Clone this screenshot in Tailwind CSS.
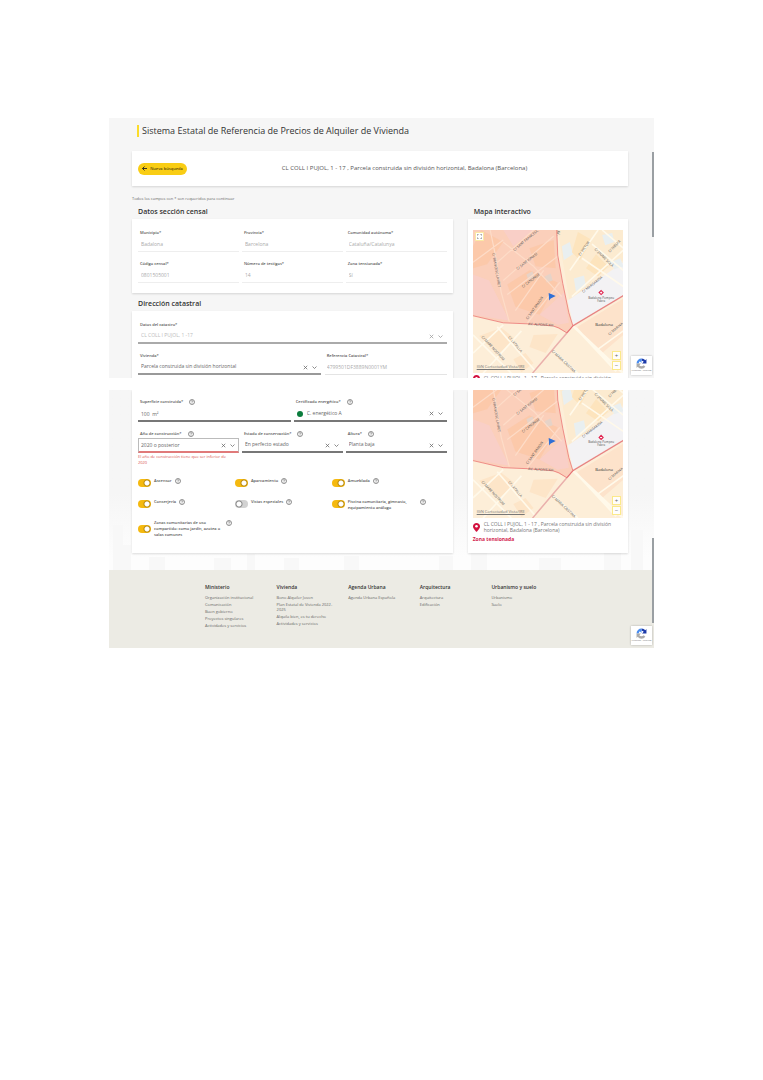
<!DOCTYPE html>
<html lang="es">
<head>
<meta charset="utf-8">
<title>Sistema Estatal de Referencia de Precios de Alquiler de Vivienda</title>
<script src="https://cdn.jsdelivr.net/npm/@tailwindcss/browser@4"></script>
</head>
<body class="min-h-screen bg-white px-[109px] pt-[118px] font-['Open_Sans','Noto_Sans',sans-serif] text-[#555]">

<!-- Shared drawings -->
<svg class="hidden" aria-hidden="true">
  <symbol id="x" viewBox="0 0 10 10"><path d="M1.500 1.500L8.500 8.500M8.500 1.500L1.500 8.500" fill="none" stroke="currentColor" stroke-width="1.5"/></symbol>
  <symbol id="down" viewBox="0 0 10 10"><path d="M1 3L5 7L9 3" fill="none" stroke="currentColor" stroke-width="1.5"/></symbol>
  <symbol id="help" viewBox="0 0 12 12"><circle cx="6" cy="6" r="5" fill="none" stroke="currentColor" stroke-width="1.3"/><path d="M4.400 4.800C4.400 2.600 7.700 2.700 7.600 4.800C7.500 6 6 6 6 7.300M6 8.200V9.300" fill="none" stroke="currentColor" stroke-width="1.2"/></symbol>
  <symbol id="pin" viewBox="0 0 14 18"><path d="M7 0C3 0 0 3 0 7C0 11.500 7 18 7 18S14 11.500 14 7C14 3 11 0 7 0Z" fill="#d3123f"/><circle cx="7" cy="6.500" r="2.600" fill="#fff"/></symbol>
  <symbol id="captcha" viewBox="0 0 20 20">
    <path d="M10 1A9 9 0 0 1 17 4L19 2V10H11L14 7A5 5 0 0 0 10 5Z" fill="#1c3aa9"/>
    <path d="M1 10A9 9 0 0 1 10 1V9L7 6A5 5 0 0 0 5 10Z" fill="#4a8df0"/>
    <path d="M1 10H9L6 13A5 5 0 0 0 14 13L17 16A9 9 0 0 1 3 16L1 18Z" fill="#ababab"/>
  </symbol>
  <symbol id="map" viewBox="0 0 149 142">
    <rect width="149" height="142" fill="#fdeed8"/>
    <path d="M84 0H149V30L120 45L99 92Z" fill="#fcebd0"/>
    <path d="M99 94L94 70L149 32V65Z" fill="#f3f2f4"/>
    <path d="M88 16L96 12L99 24L90 30ZM100 48L110 45L112 56L102 61ZM128 5L138 3L140 12L131 15ZM136 32L146 28L149 36L140 39Z" fill="#e9eff0"/>
    <path d="M149 68L102 97L128 122L149 104Z" fill="#fde3cb"/>
    <path d="M104 2L118 10L106 30L98 22ZM122 24L134 36L124 46L112 38Z" fill="#fde4bd"/>
    <path d="M6 105L28 97L42 108L26 122ZM60 104L84 103L72 122L56 116ZM40 128L52 122L60 132L48 141Z" fill="#fde5c8"/>
    <g fill="none" stroke="#fff9ea" stroke-width="1.600">
      <path d="M0 122L30 94M10 142L48 100M24 96L62 140M0 104L38 142M80 120L104 142M124 118L149 100"/>
      <path d="M99 95L149 142M102 97L142 140" stroke-width="2.400"/>
      <path d="M98 66L149 20M96 40L124 0M108 28L149 56M118 14L149 40M128 0L149 18"/>
    </g>
    <path d="M0 0H83L84 25L89 53L95 82L99 95L93 102L79 95L54 93L30 92L0 85Z" fill="#fbcfba"/>
    <path d="M8 0L30 12L14 34L0 38V16ZM34 54L56 40L84 52L66 84L42 76ZM56 18L80 10L82 38L62 36Z" fill="#fcc6a4" opacity=".7"/>
    <path d="M0 44L16 50L36 90L0 84ZM30 0H60L40 16ZM66 84L90 62L95 92L84 94Z" fill="#f8cfcd" opacity=".7"/>
    <path d="M71 46L77 43L79 50L73 52ZM53 44L59 41L61 47L55 50Z" fill="#e6d3c8"/>
    <g fill="none" stroke="#fddcc8" stroke-width="1.200">
      <path d="M17 0L22 24L28 62L36 91M0 32L30 10M22 34L60 0M30 50L80 6M34 64L84 26M42 80L70 40M54 92L86 52M60 36L88 66M30 12L60 36"/>
    </g>
    <path d="M149 65L99 95L93 102L59 142" fill="none" stroke="#eab0ac" stroke-width="1.500"/>
    <path d="M83 0L84 25L89 53L95 82L99 95L93 102L85 97L79 95L54 93L30 92L0 85M149 65L99 95L93 102" fill="none" stroke="#e8696b" stroke-width=".7"/>
    <path d="M75 62.500L82 65.500L77 68L75.500 70Z" fill="#2f6fd6"/>
    <path d="M127 60L129 62L127 64L125 62Z" fill="#fff" stroke="#e0244f" stroke-width="1.100"/>
    <g fill="#555" font-size="3.500" text-anchor="middle" font-family="Open Sans, sans-serif">
      <text transform="translate(53 11) rotate(-40)">C/ SANT FRANCESC</text>
      <text transform="translate(54 32) rotate(-38)">C/ SANT IGNASI</text>
      <text transform="translate(58 51) rotate(-38)">C/ CANONGE</text>
      <text transform="translate(62 78) rotate(-55)">C/ SANT RAMON</text>
      <text transform="translate(22 40) rotate(80)">C/ FRANCESC LAYRET</text>
      <text transform="translate(111 19) rotate(-55)">C/ VICTOR</text>
      <text transform="translate(129 28) rotate(45)">C/ JAUME SOLÀ</text>
      <text transform="translate(141 17) rotate(-45)">C/ NIELFA</text>
      <text transform="translate(119 55) rotate(-38)">C/ MARGARIDA</text>
      <text transform="translate(19 118) rotate(47)">C/ MARE NOSTRUM</text>
      <text transform="translate(41 114) rotate(50)">C/ LATRILLA</text>
      <text transform="translate(89 131) rotate(43)">C/ MARIA CRISTINA</text>
      <text transform="translate(142 99) rotate(-40)">C/ MARINA</text>
      <text transform="translate(83 3) rotate(90)">AV.</text>
      <text transform="translate(67 95) rotate(3)">AV. ALFONS XIII</text>
      <text x="127" y="68" font-size="3">Badalona Pompeu</text>
      <text x="127" y="71" font-size="3">Fabra</text>
      <text x="130" y="95" font-size="4" fill="#333">Badalona</text>
    </g>
  </symbol>
</svg>

<main>
<!-- Upper part of the form -->
<section class="relative h-[260px] overflow-hidden bg-[#f6f6f6] pr-[26px] pl-[23px] pt-[7px]">
  <div class="absolute top-[34px] right-0 h-[85px] w-[2px] bg-[#9a9fa3]"></div>
  <h1 class="ml-[5px] border-l-2 border-[#fbdc2a] pl-[3px] text-[9px] leading-[12px] text-[#333]">Sistema Estatal de Referencia de Precios de Alquiler de Vivienda</h1>

  <div class="mt-[14px] flex h-[35px] items-center bg-white px-[6px] shadow-[0_1px_2px_#0002]">
    <button class="flex h-[12px] w-[49px] items-center justify-center gap-[3px] rounded-full bg-[#f9cd14] text-[4px] font-semibold text-[#57470a]">
      <svg class="size-[5px]" viewBox="0 0 10 10"><path d="M10 5H1M5 1L1 5L5 9" fill="none" stroke="#222" stroke-width="1.800"/></svg>Nueva búsqueda</button>
    <p class="flex-1 text-center text-[6px]">CL COLL I PUJOL, 1 - 17 , Parcela construida sin división horizontal, Badalona (Barcelona)</p>
  </div>

  <p class="mt-[10px] text-[4px] leading-[6px] text-[#666]">Todos los campos con * son requeridos para continuar</p>

  <div class="mt-[4px] grid grid-cols-[2fr_1fr] gap-[15px]">
    <div>
      <h2 class="mb-[1px] pl-[6px] text-[7px] leading-[12px] font-semibold text-[#333]">Datos sección censal</h2>
      <div class="grid h-[74px] grid-cols-3 content-start gap-x-[3px] gap-y-[9px] bg-white px-[6px] pt-[11px] shadow-[0_1px_2px_#0002]">
        <div class="border-b border-[#eee]"><label for="mun" class="block pl-[2px] text-[4px] leading-[6px] font-semibold">Municipio*</label><input id="mun" disabled value="Badalona" class="block h-[15px] w-full px-[3px] text-[5px] text-[#aaa]"></div>
        <div class="border-b border-[#eee]"><label for="prov" class="block pl-[2px] text-[4px] leading-[6px] font-semibold">Provincia*</label><input id="prov" disabled value="Barcelona" class="block h-[15px] w-full px-[3px] text-[5px] text-[#aaa]"></div>
        <div class="border-b border-[#eee]"><label for="com" class="block pl-[2px] text-[4px] leading-[6px] font-semibold">Comunidad autónoma*</label><input id="com" disabled value="Cataluña/Catalunya" class="block h-[15px] w-full px-[3px] text-[5px] text-[#aaa]"></div>
        <div class="border-b border-[#eee]"><label for="cod" class="block pl-[2px] text-[4px] leading-[6px] font-semibold">Código censal*</label><input id="cod" disabled value="0801505001" class="block h-[15px] w-full px-[3px] text-[5px] text-[#aaa]"></div>
        <div class="border-b border-[#eee]"><label for="tes" class="block pl-[2px] text-[4px] leading-[6px] font-semibold">Número de testigos*</label><input id="tes" disabled value="14" class="block h-[15px] w-full px-[3px] text-[5px] text-[#aaa]"></div>
        <div class="border-b border-[#eee]"><label for="zon" class="block pl-[2px] text-[4px] leading-[6px] font-semibold">Zona tensionada*</label><input id="zon" disabled value="Sí" class="block h-[15px] w-full px-[3px] text-[5px] text-[#aaa]"></div>
      </div>

      <h2 class="mt-[5px] mb-[1px] pl-[6px] text-[7px] leading-[12px] font-semibold text-[#333]">Dirección catastral</h2>
      <div class="h-[80px] bg-white px-[6px] pt-[11px] shadow-[0_1px_2px_#0002]">
        <label for="cat" class="block pl-[2px] text-[4px] leading-[6px] font-semibold">Datos del catastro*</label>
        <div class="flex h-[16px] items-center gap-[4px] border-b-2 border-[#aaa] pt-[2px] pr-[4px] text-[#999]">
          <select id="cat" disabled class="min-w-0 flex-1 appearance-none pl-[3px] text-[5px] text-[#bbb] opacity-100"><option>CL COLL I PUJOL, 1 -17</option></select>
          <button aria-label="Borrar catastro"><svg class="size-[5px]"><use href="#x"/></svg></button><svg class="size-[5px]"><use href="#down"/></svg>
        </div>
        <div class="mt-[9px] grid grid-cols-[3fr_2fr] gap-[4px]">
          <div>
            <label for="viv" class="block pl-[2px] text-[4px] leading-[6px] font-semibold">Vivienda*</label>
            <div class="flex h-[16px] items-center gap-[4px] border-b-2 border-[#999] pt-[2px] pr-[4px] text-[#666]">
              <select id="viv" class="min-w-0 flex-1 appearance-none pl-[3px] text-[5px] text-[#666]"><option>Parcela construida sin división horizontal</option></select>
              <button aria-label="Borrar vivienda"><svg class="size-[5px]"><use href="#x"/></svg></button><svg class="size-[5px]"><use href="#down"/></svg>
            </div>
          </div>
          <div>
            <label for="ref" class="block pl-[2px] text-[4px] leading-[6px] font-semibold">Referencia Catastral*</label>
            <input id="ref" disabled value="4799501DF3889N0001YM" class="block h-[16px] w-full border-b border-[#e4e4e4] px-[2px] text-[5px] text-[#aaa]">
          </div>
        </div>
      </div>
    </div>

    <div>
      <h2 class="mb-[1px] pl-[6px] text-[7px] leading-[12px] font-semibold text-[#333]">Mapa interactivo</h2>
      <div class="bg-white px-[5px] pt-[11px] pb-[10px] shadow-[0_1px_2px_#0002]">
        <div class="relative">
          <svg class="block w-full" viewBox="0 0 149 142" role="img" aria-label="Mapa de Badalona"><use href="#map"/></svg>
          <button aria-label="Pantalla completa" class="absolute top-[2px] left-[2px] flex size-[9px] items-center justify-center border border-[#fbe9a5] bg-white text-[#777]"><svg class="size-[5px]" viewBox="0 0 10 10"><path d="M1 3V1H3M7 1H9V3M9 7V9H7M3 9H1V7" fill="none" stroke="currentColor" stroke-width="1.500"/></svg></button>
          <div class="absolute right-[2px] bottom-[3px] flex flex-col gap-[1px] text-[6px] leading-none text-[#666]">
            <button class="size-[9px] border border-[#fbe98a] bg-white/90">+</button>
            <button class="size-[9px] border border-[#fbe98a] bg-white/90">−</button>
          </div>
          <a href="#" class="absolute bottom-[3px] left-[4px] text-[4px] leading-[6px] text-[#777] underline">IGN Cartociudad Vista/IRE</a>
        </div>
        <p class="mt-[2px] flex gap-[4px] text-[5px] leading-[6px] text-[#777]"><svg class="h-[9px] w-[7px] shrink-0"><use href="#pin"/></svg><span>CL COLL I PUJOL, 1 - 17 , Parcela construida sin división horizontal, Badalona (Barcelona)</span></p>
      </div>
    </div>
  </div>
  <div class="absolute right-[2px] bottom-[3px] flex h-[19px] w-[21px] flex-col items-center justify-center bg-white shadow-[0_0_2px_#0004]">
    <svg class="size-[11px]"><use href="#captcha"/></svg><span class="text-[2px] leading-[4px] text-[#777]">Privacidad - Términos</span>
  </div>
</section>

<!-- Lower part of the form -->
<section class="relative mt-[12px] overflow-hidden bg-linear-to-b from-[#f6f6f6] from-40% to-[#fdfdfd] to-65%">
  <div class="absolute right-0 bottom-[25px] z-10 h-[85px] w-[2px] bg-[#9a9fa3]"></div>
  <svg class="absolute bottom-[78px] left-0 h-[70px] w-full" viewBox="0 0 545 70" preserveAspectRatio="none" aria-hidden="true"><path d="M4 70V25H14V45H22V70ZM40 70V57H56V70ZM105 70V58H122V70ZM138 70V54H146V70ZM175 70V58H190V70ZM235 70V56H250V70ZM330 70V56H344V70ZM362 70V48H378V70ZM430 70V58H452V70ZM495 70V40H512V70ZM522 70V30H534V70Z" fill="#f8f8f8"/></svg>
  <div class="relative grid grid-cols-[2fr_1fr] gap-[15px] pr-[26px] pb-[17px] pl-[23px]">
    <div class="bg-white px-[6px] pt-[9px] pb-[15px] shadow-[0_1px_2px_#0002]">
      <div class="grid grid-cols-2 gap-[3px]">
        <div>
          <div class="flex items-center gap-[6px] pl-[2px] text-[4px] leading-[6px] font-semibold"><label for="sup">Superficie construida*</label><svg class="size-[6px]"><use href="#help"/></svg></div>
          <input id="sup" value="100  m²" class="block h-[17px] w-full border-b-2 border-[#777] px-[3px] pt-[2px] text-[5px] text-[#666]">
        </div>
        <div>
          <div class="flex items-center gap-[6px] pl-[2px] text-[4px] leading-[6px] font-semibold"><label for="cer">Certificado energético*</label><svg class="size-[6px]"><use href="#help"/></svg></div>
          <div class="flex h-[17px] items-center gap-[4px] border-b-2 border-[#777] pt-[2px] pr-[4px] pl-[3px] text-[#666]">
            <i class="size-[6px] rounded-full bg-[#0b7d3e]"></i>
            <select id="cer" class="min-w-0 flex-1 appearance-none text-[5px]"><option>C. energético A</option></select>
            <button aria-label="Borrar certificado"><svg class="size-[5px]"><use href="#x"/></svg></button><svg class="size-[5px]"><use href="#down"/></svg>
          </div>
        </div>
      </div>
      <div class="mt-[9px] grid grid-cols-3 gap-[3px]">
        <div>
          <div class="flex items-center gap-[6px] pl-[2px] text-[4px] leading-[6px] font-semibold"><label for="ano">Año de construcción*</label><svg class="size-[6px]"><use href="#help"/></svg></div>
          <div class="mt-[1px] flex h-[15px] items-center gap-[4px] border border-b-2 border-[#bbb] border-b-[#e07a7a] pt-px pr-[3px] pl-[2px] text-[#666]">
            <select id="ano" class="min-w-0 flex-1 appearance-none text-[5px]"><option>2020 o posterior</option></select>
            <button aria-label="Borrar año"><svg class="size-[5px]"><use href="#x"/></svg></button><svg class="size-[5px]"><use href="#down"/></svg>
          </div>
          <p class="mt-[1px] text-[4px] leading-[6px] whitespace-nowrap text-[#d9534f]">El año de construcción tiene que ser inferior de<br>2020</p>
        </div>
        <div>
          <div class="flex items-center gap-[6px] pl-[2px] text-[4px] leading-[6px] font-semibold"><label for="est">Estado de conservación*</label><svg class="size-[6px]"><use href="#help"/></svg></div>
          <div class="flex h-[16px] items-center gap-[4px] border-b-2 border-[#777] pt-[2px] pr-[4px] pl-[3px] text-[#666]">
            <select id="est" class="min-w-0 flex-1 appearance-none text-[5px]"><option>En perfecto estado</option></select>
            <button aria-label="Borrar estado"><svg class="size-[5px]"><use href="#x"/></svg></button><svg class="size-[5px]"><use href="#down"/></svg>
          </div>
        </div>
        <div>
          <div class="flex items-center gap-[6px] pl-[2px] text-[4px] leading-[6px] font-semibold"><label for="alt">Altura*</label><svg class="size-[6px]"><use href="#help"/></svg></div>
          <div class="flex h-[16px] items-center gap-[4px] border-b-2 border-[#777] pt-[2px] pr-[4px] pl-[3px] text-[#666]">
            <select id="alt" class="min-w-0 flex-1 appearance-none text-[5px]"><option>Planta baja</option></select>
            <button aria-label="Borrar altura"><svg class="size-[5px]"><use href="#x"/></svg></button><svg class="size-[5px]"><use href="#down"/></svg>
          </div>
        </div>
      </div>

      <div class="mt-[12px] grid grid-cols-[97fr_97fr_115fr] gap-y-[9px] text-[4px] leading-[6px] font-semibold">
        <div class="flex h-[12px] items-start gap-[3px]"><input id="t1" type="checkbox" checked class="mt-[1px] h-[8px] w-[13px] shrink-0 appearance-none rounded-full bg-[#f5b90f] bg-[radial-gradient(circle_at_9px_4px,#fff_2px,#b98a10_3px,transparent_4px)]"><label for="t1">Ascensor</label><svg class="size-[6px]"><use href="#help"/></svg></div>
        <div class="flex h-[12px] items-start gap-[3px]"><input id="t2" type="checkbox" checked class="mt-[1px] h-[8px] w-[13px] shrink-0 appearance-none rounded-full bg-[#f5b90f] bg-[radial-gradient(circle_at_9px_4px,#fff_2px,#b98a10_3px,transparent_4px)]"><label for="t2">Aparcamiento</label><svg class="size-[6px]"><use href="#help"/></svg></div>
        <div class="flex h-[12px] items-start gap-[3px]"><input id="t3" type="checkbox" checked class="mt-[1px] h-[8px] w-[13px] shrink-0 appearance-none rounded-full bg-[#f5b90f] bg-[radial-gradient(circle_at_9px_4px,#fff_2px,#b98a10_3px,transparent_4px)]"><label for="t3">Amueblada</label><svg class="size-[6px]"><use href="#help"/></svg></div>
        <div class="flex h-[12px] items-start gap-[3px]"><input id="t4" type="checkbox" checked class="mt-[1px] h-[8px] w-[13px] shrink-0 appearance-none rounded-full bg-[#f5b90f] bg-[radial-gradient(circle_at_9px_4px,#fff_2px,#b98a10_3px,transparent_4px)]"><label for="t4">Conserjería</label><svg class="size-[6px]"><use href="#help"/></svg></div>
        <div class="flex h-[12px] items-start gap-[3px]"><input id="t5" type="checkbox" class="mt-[1px] h-[8px] w-[13px] shrink-0 appearance-none rounded-full bg-[#d2d2d2] bg-[radial-gradient(circle_at_4px_4px,#fff_2px,#888_3px,transparent_4px)]"><label for="t5">Vistas especiales</label><svg class="size-[6px]"><use href="#help"/></svg></div>
        <div class="flex h-[12px] items-start gap-[3px]"><input id="t6" type="checkbox" checked class="mt-[1px] h-[8px] w-[13px] shrink-0 appearance-none rounded-full bg-[#f5b90f] bg-[radial-gradient(circle_at_9px_4px,#fff_2px,#b98a10_3px,transparent_4px)]"><label for="t6" class="w-[69px]">Piscina comunitaria, gimnasio, equipamiento análogo</label><svg class="size-[6px]"><use href="#help"/></svg></div>
        <div class="flex h-[18px] items-start gap-[3px]"><input id="t7" type="checkbox" checked class="mt-[5px] h-[8px] w-[13px] shrink-0 appearance-none rounded-full bg-[#f5b90f] bg-[radial-gradient(circle_at_9px_4px,#fff_2px,#b98a10_3px,transparent_4px)]"><label for="t7" class="w-[69px]">Zonas comunitarias de uso compartido: como jardín, azotea o salas comunes</label><svg class="size-[6px] shrink-0"><use href="#help"/></svg></div>
      </div>
    </div>

    <div class="bg-white px-[5px] shadow-[0_1px_2px_#0002]">
      <div class="relative">
        <svg class="block w-full" viewBox="0 15 149 127" role="img" aria-label="Mapa de Badalona"><use href="#map" width="149" height="142"/></svg>
        <div class="absolute right-[2px] bottom-[3px] flex flex-col gap-[1px] text-[6px] leading-none text-[#666]">
          <button class="size-[9px] border border-[#fbe98a] bg-white/90">+</button>
          <button class="size-[9px] border border-[#fbe98a] bg-white/90">−</button>
        </div>
        <a href="#" class="absolute bottom-[3px] left-[4px] text-[4px] leading-[6px] text-[#777] underline">IGN Cartociudad Vista/IRE</a>
      </div>
      <p class="mt-[3px] flex items-center gap-[4px] text-[5px] leading-[6px] text-[#777]"><svg class="h-[9px] w-[7px] shrink-0"><use href="#pin"/></svg><span>CL COLL I PUJOL, 1 - 17 , Parcela construida sin división horizontal, Badalona (Barcelona)</span></p>
      <p class="mt-[2px] text-[5px] leading-[8px] font-bold text-[#d3264f]">Zona tensionada</p>
    </div>
  </div>

  <footer class="relative grid h-[78px] grid-cols-5 bg-[#ecebe4] pt-[13px] pr-[91px] pl-[96px] text-[4px] leading-[5px] text-[#666]">
    <div class="flex flex-col items-start gap-[2px]"><h3 class="mb-[2px] text-[5px] leading-[8px] font-semibold text-[#333]">Ministerio</h3><a href="#">Organización institucional</a><a href="#">Comunicación</a><a href="#">Buen gobierno</a><a href="#">Proyectos singulares</a><a href="#">Actividades y servicios</a></div>
    <div class="flex flex-col items-start gap-[2px] pr-[12px]"><h3 class="mb-[2px] text-[5px] leading-[8px] font-semibold text-[#333]">Vivienda</h3><a href="#">Bono Alquiler Joven</a><a href="#">Plan Estatal de Vivienda 2022-2025</a><a href="#">Alquila bien, es tu derecho</a><a href="#">Actividades y servicios</a></div>
    <div class="flex flex-col items-start gap-[2px]"><h3 class="mb-[2px] text-[5px] leading-[8px] font-semibold text-[#333]">Agenda Urbana</h3><a href="#">Agenda Urbana Española</a></div>
    <div class="flex flex-col items-start gap-[2px]"><h3 class="mb-[2px] text-[5px] leading-[8px] font-semibold text-[#333]">Arquitectura</h3><a href="#">Arquitectura</a><a href="#">Edificación</a></div>
    <div class="flex flex-col items-start gap-[2px]"><h3 class="mb-[2px] text-[5px] leading-[8px] font-semibold text-[#333]">Urbanismo y suelo</h3><a href="#">Urbanismo</a><a href="#">Suelo</a></div>
  </footer>
  <div class="absolute right-[2px] bottom-[3px] flex h-[19px] w-[21px] flex-col items-center justify-center bg-white shadow-[0_0_2px_#0004]">
    <svg class="size-[11px]"><use href="#captcha"/></svg><span class="text-[2px] leading-[4px] text-[#777]">Privacidad - Términos</span>
  </div>
</section>
</main>
</body>
</html>
